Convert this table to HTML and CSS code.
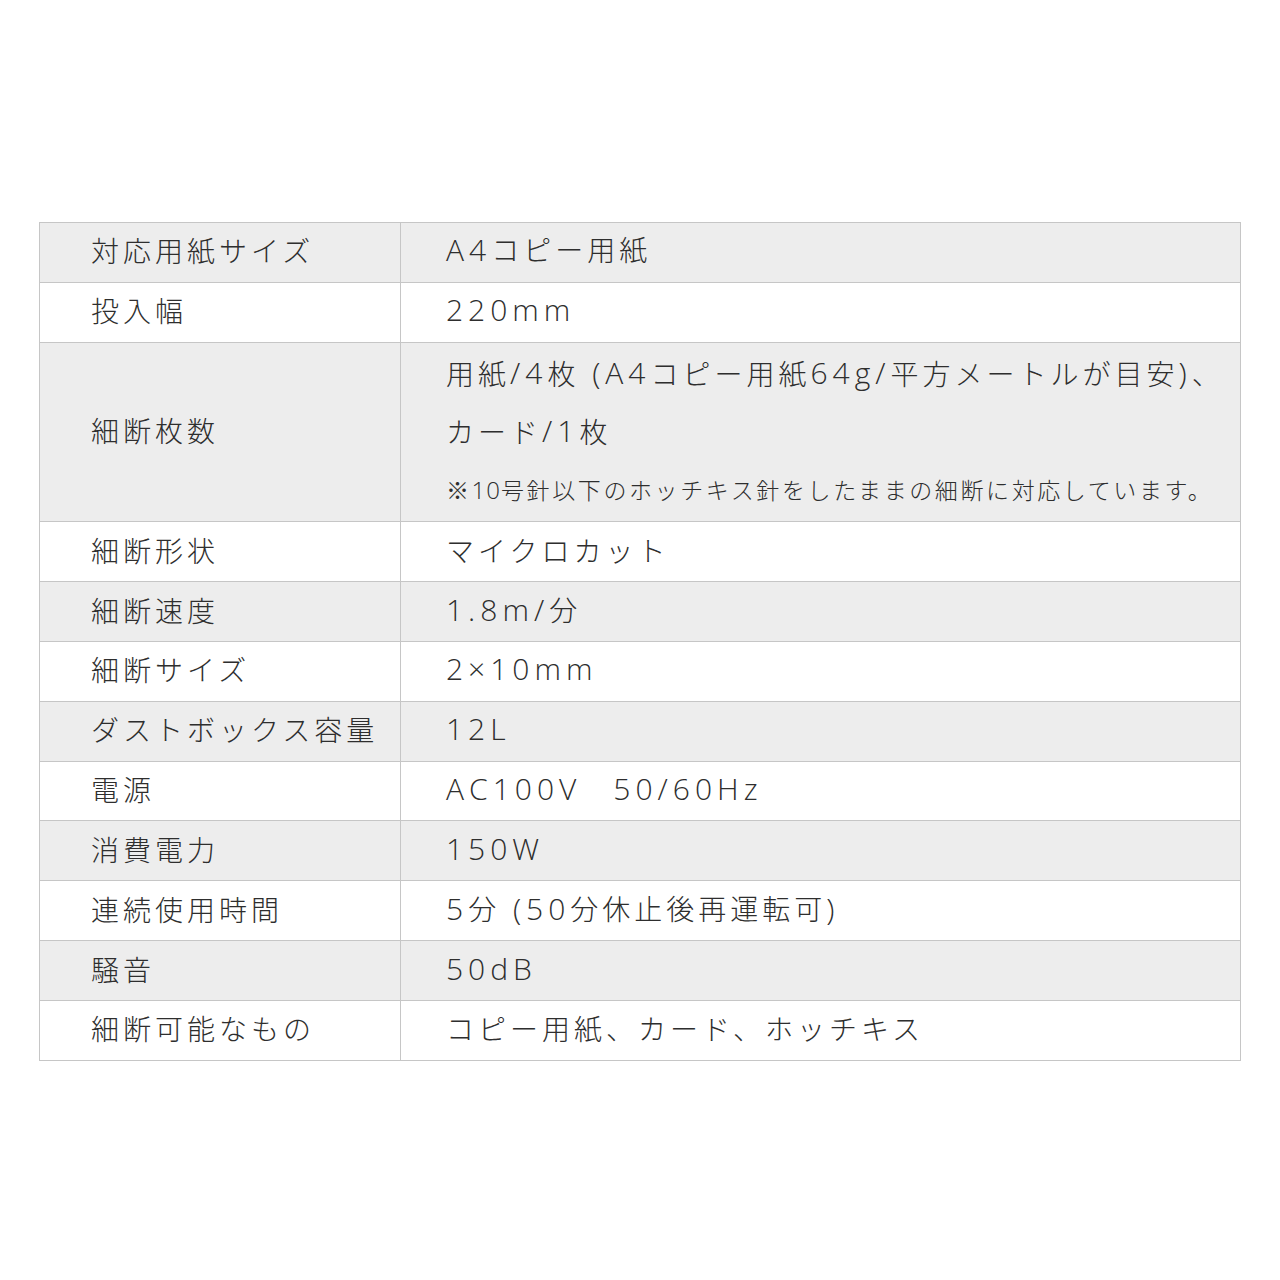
FILE: index.html
```html
<!DOCTYPE html>
<html lang="ja">
<head>
<meta charset="utf-8">
<link rel="stylesheet" href="styles.css">
</head>
<body>
<div class="page">
  <table class="spec">
    <tr class="odd"><th>対応用紙サイズ</th><td><span class="en">A4</span>コピー用紙</td></tr>
    <tr><th>投入幅</th><td><span class="en">220mm</span></td></tr>
    <tr class="odd tall"><th>細断枚数</th><td><div class="line first">用紙<span class="en">/4</span>枚<span class="en">&nbsp;(A4</span>コピー用紙<span class="en">64g/</span>平方メートルが目安<span class="en">)</span>、</div><div class="line second">カード<span class="en">/1</span>枚</div><div class="note"><span class="cjk">※</span><span class="en">10</span>号針以下のホッチキス針をしたままの細断に対応しています。</div></td></tr>
    <tr><th>細断形状</th><td>マイクロカット</td></tr>
    <tr class="odd"><th>細断速度</th><td><span class="en">1.8m/</span>分</td></tr>
    <tr><th>細断サイズ</th><td><span class="en">2×10mm</span></td></tr>
    <tr class="odd"><th>ダストボックス容量</th><td><span class="en">12L</span></td></tr>
    <tr><th>電源</th><td><span class="en">AC100V</span>　<span class="en">50/60Hz</span></td></tr>
    <tr class="odd"><th>消費電力</th><td><span class="en">150W</span></td></tr>
    <tr><th>連続使用時間</th><td><span class="en">5</span>分<span class="en">&nbsp;(50</span>分休止後再運転可<span class="en">)</span></td></tr>
    <tr class="odd"><th>騒音</th><td><span class="en">50dB</span></td></tr>
    <tr><th>細断可能なもの</th><td>コピー用紙、カード、ホッチキス</td></tr>
  </table>
</div>
</body>
</html>
```

FILE: styles.css
```css
html, body {
  margin: 0;
  padding: 0;
  background: #ffffff;
}
.page {
  width: 1280px;
  height: 1280px;
  padding-top: 222px;
  padding-left: 39px;
  box-sizing: border-box;
}
.spec {
  border-collapse: collapse;
  width: 1202px;
  font-family: "Noto Sans CJK JP", sans-serif;
  font-weight: 300;
  color: #2e2e2e;
  font-size: 28px;
  letter-spacing: 4px;
}
.spec th, .spec td {
  border: 1px solid #c6c6c6;
  height: 59.857px;
  padding: 0 0 4px 0;
  box-sizing: border-box;
  text-align: left;
  font-weight: 300;
  vertical-align: middle;
  line-height: 1;
}
.spec th {
  width: 361px;
  padding-left: 51px;
}
.spec td {
  padding-left: 45px;
}
.spec tr.odd {
  background: #ededed;
}
.spec .tall td, .spec .tall th {
  height: 179.57px;
}
.spec .tall td {
  padding-bottom: 0;
}
.en {
  font-family: "Open Sans", sans-serif;
  font-weight: 300;
  font-size: 30px;
  letter-spacing: 5px;
}
.line {
  display: flex;
  align-items: center;
}
.line.first {
  height: 60px;
}
.line.second {
  height: 56px;
}
.note {
  font-size: 23px;
  letter-spacing: 2.6px;
  height: 62px;
  display: flex;
  align-items: center;
}
.note .en {
  font-size: 24px;
  letter-spacing: 1px;
}
.cjk {
  font-family: "Noto Sans CJK JP", sans-serif;
}
```
